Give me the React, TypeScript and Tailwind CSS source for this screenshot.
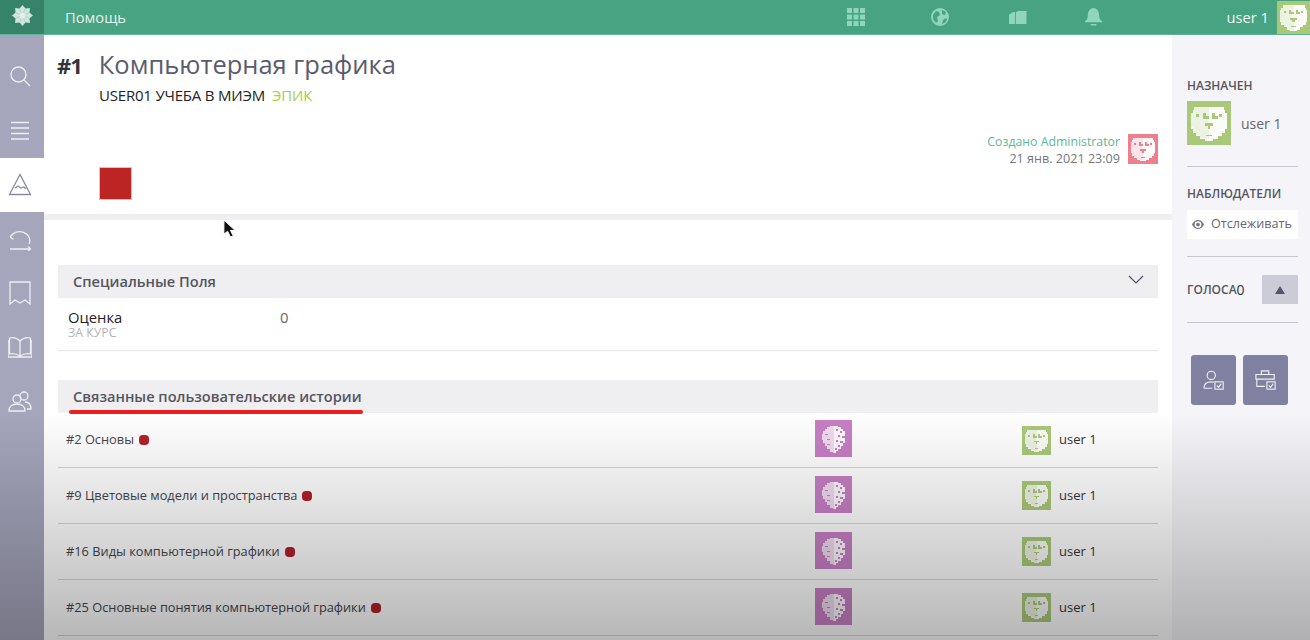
import React from "react";

const font = { fontFamily: '"Open Sans","Noto Sans",sans-serif' };

function Bear({ bg, className }: { bg: string; className: string }) {
  return (
    <svg viewBox="0 0 30 30" className={className} shapeRendering="crispEdges">
      <rect width="30" height="30" fill={bg} />
      <path d="M5 4h20v2h1v2h1v11h-1v3h-2v2h-3v2h-3v1h-6v-1H9v-2H6v-2H4v-3H3V8h1V6h1z" fill="#fff" fillOpacity=".95" />
      <path d="M5 4h10v8h-1v5h1v9h-3v-1H9v-2H6v-2H4v-3H3V8h1V6h1z" fill={bg} fillOpacity=".16" />
      <path d="M6 9h2v2H6zM22 9h2v2h-2zM11 8h2v2h2v2h-4zM17 8h2v2h2v2h-4v-2h0zM12 15h6v2h-2v2h-2v-2h-2zM13 23h4v1h-4z" fill={bg} />
    </svg>
  );
}

function Leaf({ className }: { className: string }) {
  return (
    <svg viewBox="0 0 37 37" className={className} shapeRendering="crispEdges">
      <rect width="37" height="37" fill="#c77fc4" />
      <path d="M15 6h4v27h-1v-1h-3v-3h-3v-3h-2v-3H8v-3H7v-6h1v-3h2V9h2V7h3z" fill="#fff" fillOpacity=".72" />
      <path d="M19 6h4v1h3v2h2v2h2v12h-2v3h-2v3h-3v2h-2v2h-2z" fill="#fff" fillOpacity=".95" />
      <path d="M21 9h2v2h-2zM25 11h2v2h-2zM23 15h2v2h-2zM27 16h3v2h-3zM21 20h2v2h-2zM25 21h3v2h-3zM23 25h2v2h-2zM20 28h2v2h-2zM10 14h3v1h-3zM12 19h3v1h-3zM12 24h3v1h-3z" fill="#c77fc4" />
    </svg>
  );
}

const stroke = { fill: "none", stroke: "currentColor", strokeWidth: 1.3 };

function NavIcon({ children }: { children: React.ReactNode }) {
  return <svg viewBox="0 0 24 24" className="w-6 h-6" {...stroke}>{children}</svg>;
}

function SideBtn({ children, active, h = "h-[54px]" }: { children: React.ReactNode; active?: boolean; h?: string }) {
  return (
    <div className={`${h} flex items-center justify-center pr-[4px] ${active ? "bg-white text-[#8a8aa3]" : "text-[#eeeef3]"}`}>
      {children}
    </div>
  );
}

const rows = [
  { t: "#2 Основы", h: "h-[55px]" },
  { t: "#9 Цветовые модели и пространства", h: "h-[56px]" },
  { t: "#16 Виды компьютерной графики", h: "h-[56px]" },
  { t: "#25 Основные понятия компьютерной графики", h: "h-[56px]" },
];

export default function App() {
  return (
    <div className="relative w-[1310px] h-[640px] overflow-hidden bg-white flex flex-col" style={font}>
      {/* top bar */}
      <header className="h-[35px] shrink-0 bg-[#47a381] flex items-center text-[#e4f3ed] border-b border-[#5fb396]">
        <div className="w-[44px] h-full bg-[#37836a] flex items-center justify-center pb-[4px]">
          <svg viewBox="0 0 24 24" className="w-[23px] h-[23px]">
            {[0, 45, 90, 135, 180, 225, 270, 315].map((a) => (
              <path key={a} d="M12 1l4 5-2.500 6h-3L8 6z" fill="#cfe6dc" transform={`rotate(${a} 12 12)`} />
            ))}
            {[22.5, 67.5, 112.5, 157.5, 202.5, 247.5, 292.5, 337.5].map((a) => (
              <path key={a} d="M12 4.500v7.500" stroke="#a9d1c1" strokeWidth=".8" transform={`rotate(${a} 12 12)`} />
            ))}
            <circle cx="12" cy="12" r="3" fill="#e3f1eb" />
          </svg>
        </div>
        <span className="ml-[21px] text-[14.700px]">Помощь</span>
        <div className="ml-[721px] flex items-center text-[#8ed6bd]">
          <svg viewBox="0 0 18 18" className="w-[18px] h-[18px]" fill="currentColor">
            {[0, 6.5, 13].map((x) =>
              [0, 6.5, 13].map((y) => <rect key={`${x}-${y}`} x={x} y={y} width="5" height="5" />)
            )}
          </svg>
          <svg viewBox="0 0 18 18" className="w-[18px] h-[18px] ml-[66px]" fill="currentColor">
            <path d="M9 0a9 9 0 1 0 0 18A9 9 0 0 0 9 0zM2 7l3-4 3 1 1 3-3 2 1 4-2 2-3-4zm9 9l1-4 3-2 1 1a7 7 0 0 1-5 5zM11 2l4 2-1 3-3-1z" fillRule="evenodd" />
          </svg>
          <svg viewBox="0 0 18 14" className="w-[18px] h-[14px] ml-[60px]" fill="currentColor">
            <path d="M0 4.500l4-2.500h2.200v12H0zM7 2l2-1h8.500v13H7z" />
          </svg>
          <svg viewBox="0 0 18 20" className="w-[17px] h-[19px] ml-[58px]" fill="currentColor">
            <path d="M9 0c4 0 6 4 6 8 0 3 1 5 3 6v1H0v-1c2-1 3-3 3-6 0-4 2-8 6-8zM6 17h6v1.500H6z" />
          </svg>
        </div>
        <span className="ml-auto text-[14.700px] text-[#eef8f4] mr-[8px]">user 1</span>
        <Bear bg="#a9c978" className="w-[33px] h-[35px]" />
      </header>

      <div className="flex-1 flex min-h-0">
        {/* left nav */}
        <nav className="w-[44px] shrink-0 bg-[#a5a5bc] flex flex-col pt-[14px]">
          <SideBtn>
            <NavIcon><circle cx="10.500" cy="10.500" r="7.500" /><path d="M16 16l6 6" /></NavIcon>
          </SideBtn>
          <SideBtn h="h-[55px]">
            <NavIcon><path d="M3 3.500h18M3 9h18M3 14.500h18M3 20h18" /></NavIcon>
          </SideBtn>
          <SideBtn active>
            <NavIcon><path d="M12 1.500L1.500 21.500h21zM7 15l3-2 3 2 3-1 2 2" /></NavIcon>
          </SideBtn>
          <SideBtn>
            <NavIcon><path d="M2 10l3-3M2 10l3.500 2.500M2 10a10 8.500 0 1 1 19 7M2 22h20M20 19.500l2.500 2.500-2.500 2" /></NavIcon>
          </SideBtn>
          <SideBtn>
            <NavIcon><path d="M2 1h20v22l-5-4-5 3-5-3-5 4z" /></NavIcon>
          </SideBtn>
          <SideBtn>
            <NavIcon><path d="M12 6C9 3 5 2 1.500 3v16c3.500-1 7.500 0 10.500 2 3-2 7-3 10.500-2V3C19 2 15 3 12 6zM12 6v15M1.500 6H0v16h24V6h-1.500" /></NavIcon>
          </SideBtn>
          <SideBtn>
            <NavIcon><circle cx="9" cy="10" r="4" /><circle cx="16" cy="7" r="4" /><path d="M1 22c0-5 4-7 8-7s8 2 8 7zM17 13c4 0 6 3 6 7h-4" /></NavIcon>
          </SideBtn>
        </nav>

        {/* main */}
        <main className="w-[1128px] shrink-0 min-w-0">
          <section className="h-[185px] border-b-[6px] border-[#efeff2] pt-[12px]">
            <div className="flex items-baseline">
              <span className="ml-[13px] text-[22px] font-bold text-[#33333d] tracking-[-1px]">#1</span>
              <h1 className="ml-[17px] text-[25.500px] leading-[35px] text-[#5b5b6e]">Компьютерная графика</h1>
            </div>
            <div className="ml-[55px] mt-[3px] flex text-[15px] leading-[20px] tracking-[-0.2px]">
              <span className="text-[#222]">USER01 УЧЕБА В МИЭМ</span>
              <span className="ml-[7px] text-[#a8cf45]">ЭПИК</span>
            </div>
            <div className="mr-[14px] mt-[28px] flex justify-end items-start">
              <div className="text-right text-[12.300px] leading-[17px] mr-[8px]">
                <div className="text-[#5db89a]">Создано Administrator</div>
                <div className="text-[#77777f] text-[12.600px]">21 янв. 2021 23:09</div>
              </div>
              <Bear bg="#ee7f8f" className="w-[30px] h-[30px] mt-[1px]" />
            </div>
            <div className="ml-[55px] w-[33px] h-[33px] bg-[#bd2424] border border-[#c9c9d0]" />
          </section>

          <section className="ml-[14px] mr-[14px] mt-[45px]">
            <div className="h-[33px] bg-[#efeff2] flex items-center justify-between pl-[15px] pr-[14px]">
              <span className="text-[14.600px] font-semibold text-[#55555f]">Специальные Поля</span>
              <svg viewBox="0 0 16 10" className="w-[16px] h-[10px] -mt-[4px]" fill="none" stroke="#55556a" strokeWidth="1.200">
                <path d="M1 1l7 7 7-7" />
              </svg>
            </div>
            <div className="h-[53px] border-b border-[#e6e6ea] flex pl-[10px] pt-[11px]">
              <div className="w-[212px]">
                <div className="text-[14.800px] leading-[17px] text-[#222]">Оценка</div>
                <div className="text-[12.300px] leading-[14px] text-[#b4b4ba]">ЗА КУРС</div>
              </div>
              <div className="text-[14.800px] leading-[17px] text-[#666]">0</div>
            </div>
          </section>

          <section className="ml-[14px] mr-[14px] mt-[29px]">
            <div className="relative h-[33px] bg-[#efeff2] flex items-center pl-[15px]">
              <span className="text-[14.600px] font-semibold text-[#55555f]">Связанные пользовательские истории</span>
              <div className="absolute left-[11px] top-[30px] w-[294px] h-[4px] rounded-full bg-[#ee1c1c]" />
            </div>
            {rows.map((r) => (
              <div key={r.t} className={`${r.h} border-b border-[#d8d8dc] flex items-center bg-white`}>
                <div className="w-[757px] pl-[8px] flex items-center text-[12.800px] text-[#44444d]">
                  <span>{r.t}</span>
                  <span className="ml-[5px] w-[10px] h-[10px] rounded-[4px] bg-[#b3202a]" />
                </div>
                <Leaf className="w-[37px] h-[37px] -mt-[3px]" />
                <div className="ml-[170px] flex items-center">
                  <Bear bg="#a9c978" className="w-[29px] h-[29px]" />
                  <span className="ml-[8px] text-[13px] text-[#33333a]">user 1</span>
                </div>
              </div>
            ))}
          </section>
        </main>

        {/* right */}
        <aside className="flex-1 bg-[#f5f5f9] pl-[15px] pr-[12px] pt-[43px]">
          <h3 className="text-[12px] leading-[16px] font-semibold text-[#55555f]">НАЗНАЧЕН</h3>
          <div className="mt-[7px] flex items-center">
            <Bear bg="#a9c978" className="w-[44px] h-[44px]" />
            <span className="ml-[10px] text-[14px] text-[#66666f]">user 1</span>
          </div>
          <div className="mt-[21px] h-px bg-[#c8c8d0]" />
          <h3 className="mt-[19px] text-[12px] leading-[16px] font-semibold text-[#55555f]">НАБЛЮДАТЕЛИ</h3>
          <div className="mt-[8px] h-[29px] bg-white flex items-center pl-[5px] text-[12.600px] text-[#66666f]">
            <svg viewBox="0 0 16 12" className="w-[12px] h-[9px]" fill="#77777f">
              <path fillRule="evenodd" d="M8 0c3.500 0 6.500 2.500 8 6-1.500 3.500-4.500 6-8 6S1.500 9.500 0 6c1.500-3.500 4.500-6 8-6zm0 1.500a4.500 4.500 0 1 0 0 9 4.500 4.500 0 0 0 0-9zM8 3.500a2.500 2.500 0 1 1 0 5 2.500 2.500 0 0 1 0-5z" />
            </svg>
            <span className="ml-[7px]">Отслеживать</span>
          </div>
          <div className="mt-[17px] h-px bg-[#c8c8d0]" />
          <div className="mt-[18px] flex items-center">
            <span className="text-[12px] font-semibold text-[#55555f]">ГОЛОСА</span>
            <span className="text-[14px] text-[#33333a]">0</span>
            <div className="ml-auto w-[36px] h-[29px] bg-[#ccccd8] flex items-center justify-center">
              <div className="w-0 h-0 border-l-[5px] border-r-[5px] border-b-[8px] border-l-transparent border-r-transparent border-b-[#55556a]" />
            </div>
          </div>
          <div className="mt-[18px] h-px bg-[#c8c8d0]" />
          <div className="mt-[32px] ml-[4px] flex gap-[7px]">
            <div className="w-[45px] h-[50px] rounded-[3px] bg-[#8080a0] flex items-center justify-center text-[#f0f0f5]">
              <svg viewBox="0 0 24 24" className="w-[22px] h-[22px]" fill="none" stroke="currentColor" strokeWidth="1.200">
                <circle cx="9" cy="7" r="4.500" />
                <path d="M1 21c0-5 3-7 8-7 1 0 2 0 3 .5M1 21h9" />
                <rect x="13" y="14" width="9" height="8" />
                <path d="M15 18l2 2 3-4" />
              </svg>
            </div>
            <div className="w-[45px] h-[50px] rounded-[3px] bg-[#8080a0] flex items-center justify-center text-[#f0f0f5]">
              <svg viewBox="0 0 24 24" className="w-[22px] h-[22px]" fill="none" stroke="currentColor" strokeWidth="1.200">
                <path d="M7 6V2h8v4M1 6h20v5H1zM2 11v8h9" />
                <rect x="13" y="14" width="9" height="8" />
                <path d="M15 18l2 2 3-4" />
              </svg>
            </div>
          </div>
        </aside>
      </div>

      {/* cursor in the recording */}
      <svg viewBox="0 0 14 20" className="absolute left-[223px] top-[219px] w-[13px] h-[19px]">
        <path d="M1 1v15l4-3 3 6 3-1-3-6h5z" fill="#111" stroke="#fff" strokeWidth="1" />
      </svg>
      {/* video shade over the bottom of the frame */}
      <div className="absolute left-0 right-0 top-[412px] h-[228px] pointer-events-none bg-gradient-to-b from-[#00000000] to-[#00000048]" />
    </div>
  );
}
